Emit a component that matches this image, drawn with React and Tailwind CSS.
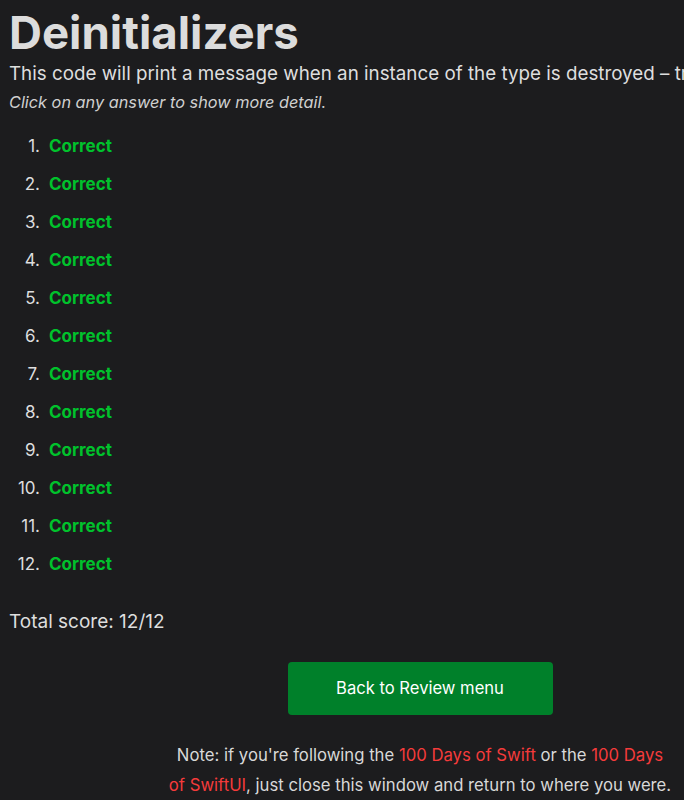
export default function App() {
  const items = Array.from({ length: 12 }, (_, i) => i + 1);
  return (
    <div className="min-h-[800px] w-[684px] overflow-hidden bg-[#1c1c1e] text-[#dedede]" style={{ fontFamily: "Inter, 'Noto Sans', sans-serif" }}>
      <div className="w-[840px] px-[9px]">
        <h1 className="pt-[6px] text-[45.6px] font-bold leading-[54px] text-[#dcdcdc]">Deinitializers</h1>
        <p className="whitespace-nowrap text-[18.8px] leading-[28px]">This code will print a message when an instance of the type is destroyed – true or false?</p>
        <p className="text-[16.3px] italic leading-[28px] text-[#d0d0d0]">Click on any answer to show more detail.</p>
        <ol className="mt-[19px] flex flex-col gap-[16px]">
          {items.map((n) => (
            <li key={n} className="flex items-center text-[17px] leading-[22px]">
              <span className="w-[40px] pr-[9px] text-right">{n}.</span>
              <span className="font-bold text-[#00c22c]">Correct</span>
            </li>
          ))}
        </ol>
        <p className="mt-[34px] text-[19px] leading-[26px]">Total score: 12/12</p>
        <div className="mt-[27px] flex justify-center">
          <button className="h-[53px] w-[265px] rounded-[4px] bg-[#00802a] text-[16.6px] text-white">Back to Review menu</button>
        </div>
        <p className="mx-auto mt-[25px] w-[504px] text-center text-[16.7px] leading-[30px] text-[#d8d8d8]">
          Note: if you're following the <span className="text-[#f53b3b]">100 Days of Swift</span> or the <span className="text-[#f53b3b]">100 Days of SwiftUI</span>, just close this window and return to where you were.
        </p>
      </div>
    </div>
  );
}
